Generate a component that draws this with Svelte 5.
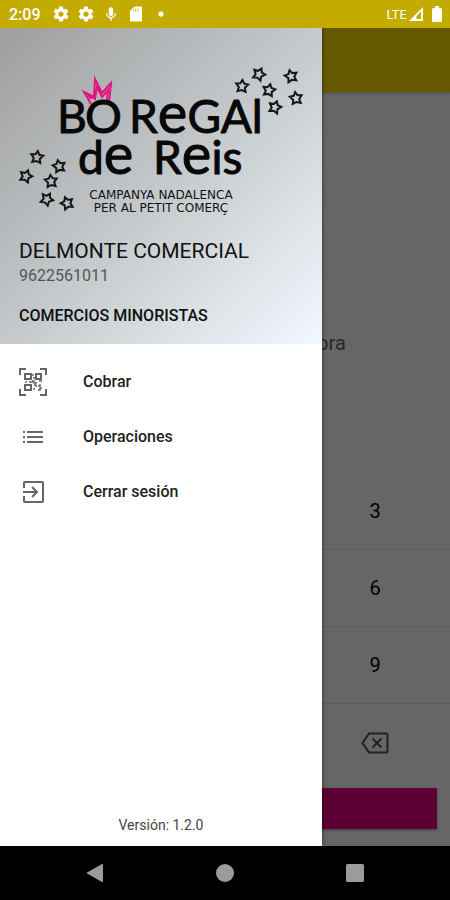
<script>
    let amount = $state('');    // Amount typed on the keypad
    let selected = $state('');  // Last option picked in the drawer

    const keys = ['1', '2', '3', '4', '5', '6', '7', '8', '9', ',', '0', 'del'];

    const options = [
        { id: 'charge', label: 'Cobrar' },
        { id: 'operations', label: 'Operaciones' },
        { id: 'logout', label: 'Cerrar sesión' }
    ];

    // Stars on both sides of the logo: x, y, rotation
    const stars = [
        [37, 156, 8], [59, 165, -12], [26, 175, 20], [51, 180, -6], [47, 198, 30], [67, 202, -20],
        [242, 85, 5], [259, 73, 24], [291, 75, -14], [269, 89, 12], [296, 97, -8], [275, 106, 18]
    ];

    // Function to handle a key of the keypad
    function press(key) {
        if (key === 'del') {
            amount = amount.slice(0, -1);
        } else {
            amount += key;
        }
    }
</script>

{#snippet gear()}
    <svg class="status-icon" viewBox="0 0 24 24" aria-hidden="true">
        <path d="M19.4 13a7.5 7.5 0 0 0 0-2l2.1-1.6a.5.5 0 0 0 .1-.7l-2-3.4a.5.5 0 0 0-.6-.2l-2.5 1a7.3 7.3 0 0 0-1.7-1l-.4-2.6a.5.5 0 0 0-.5-.5h-4a.5.5 0 0 0-.5.4L9.2 5.1a8 8 0 0 0-1.7 1L5 5.1a.5.5 0 0 0-.6.2l-2 3.4a.5.5 0 0 0 .1.7L4.6 11a7.5 7.5 0 0 0 0 2l-2.1 1.6a.5.5 0 0 0-.1.7l2 3.4c.1.2.4.3.6.2l2.5-1c.5.4 1.1.7 1.7 1l.4 2.6c0 .3.2.5.5.5h4c.3 0 .5-.2.5-.5l.4-2.6a7 7 0 0 0 1.7-1l2.5 1c.2.1.5 0 .6-.2l2-3.4a.5.5 0 0 0-.1-.7zM12 15.5a3.5 3.5 0 1 1 0-7 3.5 3.5 0 0 1 0 7z" />
    </svg>
{/snippet}

<div class="screen">
    <header class="status-bar">
        <span class="clock">2:09</span>
        {@render gear()}
        {@render gear()}
        <svg class="status-icon" viewBox="0 0 24 24" aria-hidden="true">
            <path d="M12 14.5a3 3 0 0 0 3-3V6a3 3 0 0 0-6 0v5.5a3 3 0 0 0 3 3zM17 11h1.7c0 3.4-2.7 6.2-5.7 6.7V21h-2v-3.3c-3-.5-5.7-3.3-5.7-6.7H7c0 3 2.4 5 5 5s5-2 5-5z" />
        </svg>
        <svg class="status-icon" viewBox="0 0 24 24" aria-hidden="true">
            <path d="M18.5 2H10L4 8v12.5A1.5 1.5 0 0 0 5.5 22h13a1.5 1.5 0 0 0 1.5-1.5v-17A1.5 1.5 0 0 0 18.5 2z" />
            <path d="M8.5 6v3M11.5 5v4M14.5 5v4" stroke="#c4ab00" stroke-width="1" />
        </svg>
        <svg class="status-icon" viewBox="0 0 24 24" aria-hidden="true">
            <circle cx="12" cy="12" r="3.5" />
        </svg>
        <span class="network">LTE</span>
        <svg class="status-icon" viewBox="0 0 18 18" aria-hidden="true">
            <path fill-rule="evenodd" d="M2 16 16 2v14zM7 14h7V6.5L9.5 11v3z" />
        </svg>
        <svg class="battery" viewBox="0 0 10 16" aria-hidden="true">
            <path d="M3 0h4v2h1.5A1.5 1.5 0 0 1 10 3.5v11A1.5 1.5 0 0 1 8.5 16h-7A1.5 1.5 0 0 1 0 14.5v-11A1.5 1.5 0 0 1 1.5 2H3z" />
        </svg>
    </header>

    <div class="stage">
        <main class="page" inert>
            <div class="app-bar"></div>
            <div class="amount">
                <p>{amount || 'Introduzca importe compra'}</p>
            </div>
            <div class="keypad">
                {#each keys as key}
                    <button class="key" onclick={() => press(key)} aria-label={key}>
                        {#if key === 'del'}
                            <svg class="delete-icon" viewBox="0 0 28 22" aria-hidden="true">
                                <path d="M8 1.5h17.5a1 1 0 0 1 1 1v17a1 1 0 0 1-1 1H8L1.5 11z" />
                                <path d="m11.5 6.5 9 9m0-9-9 9" />
                            </svg>
                        {:else}
                            {key}
                        {/if}
                    </button>
                {/each}
            </div>
            <button class="pay" aria-label="Cobrar"></button>
        </main>

        <div class="scrim"></div>

        <aside class="drawer">
            <div class="profile">
                <svg class="logo" viewBox="0 60 322 160" role="img" aria-label="Bo regal de reis">
                    <path class="crown" d="M91 103 84 91l10 5 1-18 7 14 9-10-2 20M91 98l-3-4 7 4 2-12 5 10 6-7-1 10" />
                    <g class="brand">
                        <text x="57" y="132">B</text>
                        <text x="85" y="132">O</text>
                        <text x="129" y="132">R<tspan class="tall">e</tspan>GAl</text>
                        <text x="78" y="173">d<tspan class="tall">e</tspan></text>
                        <text x="153" y="173">R<tspan class="tall">e</tspan>is</text>
                    </g>
                    <g class="tagline">
                        <text x="161" y="198">CAMPANYA NADALENCA</text>
                        <text x="161" y="211">PER AL PETIT COMERÇ</text>
                    </g>
                    {#each stars as [x, y, turn]}
                        <path class="star" transform="translate({x} {y}) rotate({turn})" d="M0-6 2-2.5 6-2 3 1.5 4 5.5 0 4-4 5.5-3 1.5-6-2-2-2.5z" />
                    {/each}
                </svg>
                <h1>DELMONTE COMERCIAL</h1>
                <p class="phone">9622561011</p>
                <p class="category">COMERCIOS MINORISTAS</p>
            </div>

            <nav class="menu">
                {#each options as option}
                    <button class="option" class:selected={selected === option.id} onclick={() => (selected = option.id)}>
                        <svg class="option-icon" viewBox="0 0 28 28" aria-hidden="true">
                            {#if option.id === 'charge'}
                                <path d="M1 7V1h6M21 1h6v6M27 21v6h-6M7 27H1v-6" />
                                <path d="M6 6h6v5H6zM17 6h5v5h-5zM6 17h6v5H6z" />
                                <path class="fine" d="M14 6v2M15 9v2M6 14h2M10 14h4M13 13h2v2h3M20 13h3M15 17h2v2M15 22v-2M19 18h2v-2M19 22h2v-2h2" />
                            {:else if option.id === 'operations'}
                                <path d="M4 9h2M4 14h2M4 19h2M8 9h16M8 14h16M8 19h16" />
                            {:else}
                                <path d="M5 10V5a1 1 0 0 1 1-1h17a1 1 0 0 1 1 1v18a1 1 0 0 1-1 1H6a1 1 0 0 1-1-1v-5" />
                                <path d="M4 14h14M13 9l5 5-5 5" />
                            {/if}
                        </svg>
                        {option.label}
                    </button>
                {/each}
            </nav>

            <p class="version">Versión: 1.2.0</p>
        </aside>
    </div>

    <footer class="nav-bar">
        <button aria-label="Atrás">
            <svg viewBox="0 0 20 20"><path d="M18 1v18a1 1 0 0 1-1 0L3 11a1 1 0 0 1 0-2l14-8z" /></svg>
        </button>
        <button aria-label="Inicio">
            <svg viewBox="0 0 20 20"><circle cx="10" cy="10" r="9" /></svg>
        </button>
        <button aria-label="Recientes">
            <svg viewBox="0 0 20 20"><rect x="1" y="1" width="18" height="18" rx="1.5" /></svg>
        </button>
    </footer>
</div>

<style>
    :global(body) {
        margin: 0;
        font-family: Roboto, "Liberation Sans", sans-serif;
    }

    .screen {
        display: flex;
        flex-direction: column;
        min-height: 100vh;
    }

    h1, p {
        margin: 0;
        font-weight: 400;
    }

    button {
        padding: 0;
        border: none;
        background: none;
        font: inherit;
        color: inherit;
        cursor: pointer;
    }

    .status-bar {
        display: flex;
        align-items: center;
        gap: 7px;
        height: 28px;
        padding: 0 8px 0 9px;
        background-color: #c4ab00;
        color: #fff;
    }

    .clock {
        margin-right: 4px;
        font-size: 16px;
        font-weight: 500;
    }

    .status-icon {
        width: 18px;
        height: 18px;
        fill: #fff;
    }

    .network {
        margin-left: auto;
        margin-right: -7px;
        font-size: 13px;
    }

    .battery {
        width: 10px;
        height: 16px;
        fill: #fff;
    }

    .stage {
        position: relative;
        display: flex;
        flex: 1;
        overflow: hidden;
    }

    .page {
        display: flex;
        flex-direction: column;
        flex: 1;
        background-color: #fff;
    }

    .app-bar {
        height: 64px;
        background-color: #ffdc00;
        box-shadow: 0 1px 3px rgba(0, 0, 0, 0.3);
    }

    .amount {
        flex: 1;
        display: flex;
        align-items: center;
        justify-content: center;
        padding-top: 120px;
        font-size: 20px;
        color: #666;
    }

    .keypad {
        display: grid;
        grid-template-columns: repeat(3, 1fr);
    }

    .key {
        display: flex;
        align-items: center;
        justify-content: center;
        height: 77px;
        box-sizing: border-box;
        border-bottom: 1px solid #e6e6e6;
        font-size: 20px;
        color: #000;
    }

    .key:nth-last-child(-n + 3) {
        border-bottom: none;
    }

    .delete-icon {
        width: 28px;
        height: 22px;
        fill: none;
        stroke: #555;
        stroke-width: 2;
    }

    .pay {
        height: 41px;
        margin: 7px 13px 17px;
        border-radius: 1px;
        background-color: #e8007f;
        box-shadow: 0 1px 3px rgba(0, 0, 0, 0.4);
    }

    .scrim {
        position: absolute;
        inset: 0;
        background-color: rgba(0, 0, 0, 0.6);
    }

    .drawer {
        position: absolute;
        top: 0;
        bottom: 0;
        left: 0;
        display: flex;
        flex-direction: column;
        width: 322px;
        max-width: 85%;
        background-color: #fff;
        box-shadow: 0 0 4px rgba(0, 0, 0, 0.6);
    }

    .profile {
        padding: 33px 0 18px;
        background: linear-gradient(135deg, #9d9e9f 0%, #c0c4c6 45%, #d8dee1 72%, #f2f8ff 100%);
        color: #111;
    }

    .logo {
        display: block;
        width: 100%;
    }

    .brand {
        font-family: Lato, sans-serif;
        font-size: 46px;
        fill: #080808;
        stroke: #080808;
        stroke-width: 1;
        stroke-linejoin: round;
    }

    .tall {
        font-size: 56px;
    }

    .tagline {
        font-family: "DejaVu Sans", sans-serif;
        font-size: 12px;
        text-anchor: middle;
        fill: #111;
    }

    .crown {
        fill: none;
        stroke: #e5127d;
        stroke-width: 2;
    }

    .star {
        fill: none;
        stroke: #151515;
        stroke-width: 2;
    }

    .profile h1,
    .profile p {
        padding: 0 19px;
    }

    .profile h1 {
        margin-top: 18px;
        font-size: 21px;
        line-height: 24px;
    }

    .profile .phone {
        margin-top: 3px;
        font-size: 16px;
        line-height: 20px;
        color: #555;
    }

    .profile .category {
        margin-top: 20px;
        font-size: 16px;
        font-weight: 500;
        line-height: 20px;
    }

    .menu {
        display: flex;
        flex-direction: column;
        padding-top: 10px;
    }

    .option {
        display: flex;
        align-items: center;
        gap: 36px;
        height: 55px;
        padding: 0 19px;
        font-size: 16px;
        font-weight: 500;
        color: #222;
    }

    .option.selected {
        background-color: #eee;
    }

    .option-icon {
        width: 28px;
        height: 28px;
        fill: none;
        stroke: #666;
        stroke-width: 2;
    }

    .fine {
        stroke-width: 1.5;
    }

    .version {
        margin-top: auto;
        padding-bottom: 12px;
        font-size: 14px;
        line-height: 18px;
        text-align: center;
        color: #444;
    }

    .nav-bar {
        display: grid;
        grid-template-columns: repeat(3, 1fr);
        height: 54px;
        padding: 0 30px;
        background-color: #000;
    }

    .nav-bar button {
        display: flex;
        align-items: center;
        justify-content: center;
    }

    .nav-bar svg {
        width: 20px;
        height: 20px;
        fill: #9b9b9b;
    }
</style>
